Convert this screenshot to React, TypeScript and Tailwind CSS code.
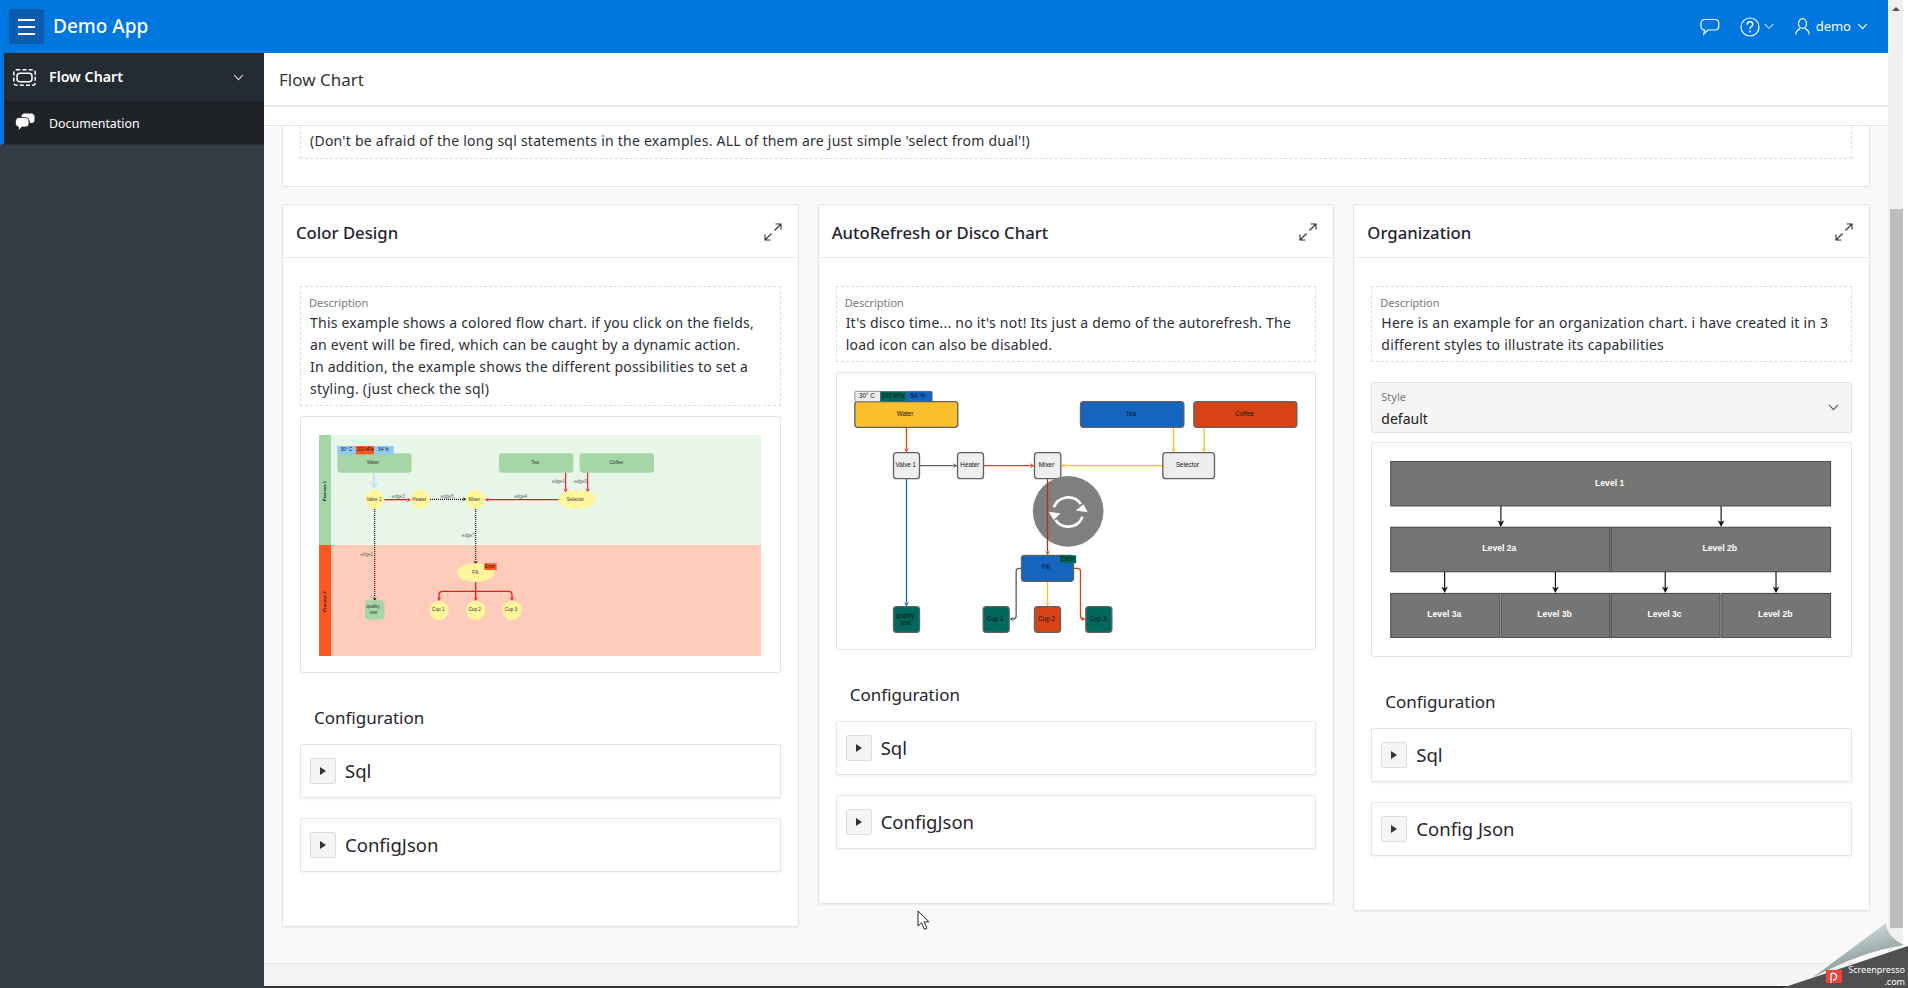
import type { ReactNode } from "react";

const Chevron = ({ className = "", color = "#fff" }: { className?: string; color?: string }) => (
  <svg className={className} viewBox="0 0 12 8" fill="none" stroke={color} strokeWidth="1.2">
    <polyline points="1,1 6,6.5 11,1" />
  </svg>
);

const ExpandIcon = () => (
  <svg className="w-[18px] h-[18px] -mt-[2px]" viewBox="0 0 18 18" fill="none" stroke="#3b2b2f" strokeWidth="1.1">
    <path d="M10.5 7.5 L17 1 M11.5 1 H17 V6.5" />
    <path d="M7.5 10.5 L1 17 M1 11.5 V17 H6.5" />
  </svg>
);

// arrow head pointing along +y, rotated into place
const Head = ({ x, y, a = 0, c, s = 7 }: { x: number; y: number; a?: number; c: string; s?: number }) => (
  <polygon
    transform={`translate(${x} ${y}) rotate(${a})`}
    points={`0,0 ${-s},${-2 * s} 0,${-1.4 * s} ${s},${-2 * s}`}
    fill={c}
  />
);

const ARIAL = "'Liberation Sans', Arial, sans-serif";

function ColorChart() {
  const yellow = "#fff59d";
  const green = "#a5d6a7";
  const label = (x: number, y: number, t: string, fill = "#333") => (
    <text x={x} y={y} fontSize="14" fill={fill} textAnchor="middle" dominantBaseline="middle">
      {t}
    </text>
  );
  return (
    <svg className="w-[442px] h-[221px] block" viewBox="57 45 1326 663" fontFamily={ARIAL}>
      <rect x="57" y="45" width="1326" height="330" fill="#e8f5e9" />
      <rect x="57" y="375" width="1326" height="333" fill="#ffccbc" />
      <rect x="57" y="45" width="36" height="330" fill={green} />
      <rect x="57" y="375" width="36" height="333" fill="#ff5722" />
      <text transform="translate(75 213) rotate(-90)" fontSize="13" fontWeight="700" textAnchor="middle" dominantBaseline="middle" fill="#111">Process 1</text>
      <text transform="translate(75 545) rotate(-90)" fontSize="13" fontWeight="700" textAnchor="middle" dominantBaseline="middle" fill="#111">Process 2</text>

      <rect x="112" y="100" width="223" height="58" rx="10" fill={green} />
      <rect x="597" y="100" width="223" height="58" rx="10" fill={green} />
      <rect x="839" y="100" width="223" height="58" rx="10" fill={green} />
      <rect x="112" y="78" width="55" height="25" fill="#90caf9" />
      <rect x="167" y="78" width="55" height="25" fill="#ff5722" />
      <rect x="222" y="78" width="59" height="25" fill="#90caf9" />
      {label(139, 90, "30° C", "#111")}
      {label(195, 90, "203 kPa", "#111")}
      {label(251, 90, "54 %", "#111")}
      {label(219, 128, "Water")}
      {label(705, 128, "Tea")}
      {label(949, 128, "Coffee")}

      {/* edges */}
      <path d="M222 158 V203" stroke="#bbdefb" strokeWidth="5" fill="none" />
      <path d="M212 185 L222 205 L232 185" stroke="#bbdefb" strokeWidth="3" fill="none" />
      <path d="M253 239 H322" stroke="#f01818" strokeWidth="4" />
      <Head x={333} y={239} a={-90} c="#f01818" s={6} />
      <path d="M390 238 H490" stroke="#111" strokeWidth="3.5" strokeDasharray="3 3" />
      <Head x={500} y={238} a={-90} c="#111" s={6} />
      <path d="M775 239 H565" stroke="#f01818" strokeWidth="4" />
      <Head x={555} y={239} a={90} c="#f01818" s={6} />
      <path d="M797 158 V208" stroke="#f01818" strokeWidth="3.5" />
      <Head x={797} y={218} c="#f01818" s={6} />
      <path d="M863 158 V208" stroke="#f01818" strokeWidth="3.5" />
      <Head x={863} y={218} c="#f01818" s={6} />
      <path d="M224 267 V532" stroke="#111" strokeWidth="3.5" strokeDasharray="3 3" />
      <Head x={224} y={544} c="#111" s={6} />
      <path d="M527 267 V422" stroke="#111" strokeWidth="3.5" strokeDasharray="3 3" />
      <Head x={527} y={434} c="#111" s={6} />
      <path d="M527 486 V535 M527 514 H428 Q417 514 417 525 V535 M527 514 H625 Q636 514 636 525 V535" stroke="#f01818" strokeWidth="4" fill="none" />
      <Head x={417} y={544} c="#f01818" s={6} />
      <Head x={527} y={544} c="#f01818" s={6} />
      <Head x={636} y={544} c="#f01818" s={6} />
      {label(295, 230, "edge3", "#666")}
      {label(442, 230, "edge5", "#666")}
      {label(662, 230, "edge4", "#666")}
      {label(775, 185, "edge6", "#666")}
      {label(842, 185, "edge5", "#666")}
      {label(505, 347, "edge7", "#666")}
      {label(201, 403, "edge1", "#666")}

      {/* nodes */}
      <circle cx="224" cy="238" r="29" fill={yellow} />
      <circle cx="361" cy="238" r="29" fill={yellow} />
      <circle cx="526" cy="238" r="29" fill={yellow} />
      <ellipse cx="831" cy="238" rx="56" ry="29" fill={yellow} />
      <ellipse cx="527" cy="458" rx="56" ry="28" fill={yellow} />
      <circle cx="417" cy="571" r="29" fill={yellow} />
      <circle cx="527" cy="571" r="29" fill={yellow} />
      <circle cx="636" cy="571" r="29" fill={yellow} />
      <rect x="195" y="541" width="58" height="58" rx="10" fill={green} />
      <rect x="553" y="430" width="37" height="20" fill="#ff5722" />
      {label(222, 239, "Valve 1")}
      {label(358, 239, "Heater")}
      {label(523, 239, "Mixer")}
      {label(826, 239, "Selector")}
      {label(526, 458, "Fill")}
      {label(415, 569, "Cup 1")}
      {label(524, 569, "Cup 2")}
      {label(633, 569, "Cup 3")}
      {label(219, 560, "quality")}
      {label(221, 578, "test")}
      {label(570, 440, "Error", "#111")}
    </svg>
  );
}

function DiscoChart() {
  const box = (x: number, y: number, w: number, h: number, fill: string) => (
    <rect x={x} y={y} width={w} height={h} rx="9" fill={fill} stroke="#616161" strokeWidth="4" />
  );
  const t = (x: number, y: number, s: string) => (
    <text x={x} y={y} fontSize="19" fill="#111" textAnchor="middle" dominantBaseline="middle">
      {s}
    </text>
  );
  const orange = "#d84315";
  const amber = "#fbc02d";
  const blue = "#1565c0";
  const teal = "#00695c";
  const gray = "#616161";
  const light = "#eeeeee";
  return (
    <svg className="w-[447px] h-[245px] block" viewBox="50 30 1340 735" fontFamily={ARIAL}>
      {/* edges */}
      <path d="M213 142 V206" stroke={orange} strokeWidth="4" />
      <Head x={213} y={218} c={orange} s={7} />
      <path d="M252 257 H354" stroke={gray} strokeWidth="4" />
      <Head x={366} y={257} a={-90} c={gray} s={7} />
      <path d="M444 257 H585" stroke={orange} strokeWidth="4" />
      <Head x={597} y={257} a={-90} c={orange} s={7} />
      <path d="M982 257 H688" stroke={amber} strokeWidth="4" />
      <Head x={676} y={257} a={90} c={amber} s={7} />
      <path d="M1014 142 V206" stroke={amber} strokeWidth="4" />
      <Head x={1014} y={218} c={amber} s={7} />
      <path d="M1106 142 V206" stroke={amber} strokeWidth="4" />
      <Head x={1106} y={218} c={amber} s={7} />
      <path d="M213 296 V668" stroke={blue} strokeWidth="4" />
      <Head x={213} y={680} c={blue} s={7} />
      <path d="M636 604 V668" stroke={amber} strokeWidth="4" />
      <Head x={636} y={680} c={amber} s={7} />
      <path d="M558 565 H551 Q542 565 542 574 V708 Q542 717 533 717" stroke={gray} strokeWidth="4" fill="none" />
      <Head x={521} y={717} a={90} c={gray} s={7} />
      <path d="M714 565 H726 Q735 565 735 574 V708 Q735 717 741 717" stroke={orange} strokeWidth="4" fill="none" />
      <Head x={751} y={717} a={-90} c={orange} s={7} />

      {/* nodes */}
      {box(58, 65, 309, 77, amber)}
      {box(735, 65, 310, 77, blue)}
      {box(1075, 65, 309, 77, orange)}
      {box(174, 218, 78, 78, light)}
      {box(366, 218, 78, 78, light)}
      {box(597, 218, 79, 78, light)}
      {box(982, 218, 155, 78, light)}
      {box(558, 526, 156, 78, blue)}
      {box(174, 680, 78, 77, teal)}
      {box(443, 680, 78, 77, teal)}
      {box(597, 680, 78, 77, orange)}
      {box(751, 680, 78, 77, teal)}
      <rect x="58" y="34" width="77" height="31" rx="4" fill={light} stroke={gray} strokeWidth="2" />
      <rect x="135" y="34" width="78" height="31" fill={teal} stroke={gray} strokeWidth="2" />
      <rect x="213" y="34" width="77" height="31" rx="4" fill={blue} stroke={gray} strokeWidth="2" />
      <rect x="673" y="526" width="49" height="24" rx="3" fill={teal} />
      {t(94, 49, "30° C")}
      {t(171, 49, "203 kPa")}
      {t(247, 49, "54 %")}
      {t(209, 102, "Water")}
      {t(886, 102, "Tea")}
      {t(1227, 102, "Coffee")}
      {t(211, 255, "Valve 1")}
      {t(403, 255, "Heater")}
      {t(633, 255, "Mixer")}
      {t(1056, 255, "Selector")}
      {t(631, 561, "Fill")}
      {t(696, 538, "Error")}
      {t(209, 708, "quality")}
      {t(211, 730, "test")}
      {t(479, 717, "Cup 1")}
      {t(633, 717, "Cup 2")}
      {t(787, 717, "Cup 3")}

      {/* load spinner */}
      <circle cx="698" cy="394" r="106" fill="#7f7f7f" />
      <path d="M636 296 V514" stroke="#a8351a" strokeWidth="4" />
      <Head x={636} y={526} c={orange} s={7} />
      <g fill="none" stroke="#fff" strokeWidth="8">
        <path d="M655 382 A46 46 0 0 1 736 372" />
        <path d="M741 410 A46 46 0 0 1 660 420" />
      </g>
      <polygon points="722,394 758,394 742,372" fill="#fff" transform="rotate(8 740 385)" />
      <polygon points="638,398 674,398 656,420" fill="#fff" transform="rotate(8 656 408)" />
    </svg>
  );
}

function OrgChart() {
  const node = (x: number, y: number, w: number, h: number, s: string) => (
    <g key={s + x}>
      <rect x={x} y={y} width={w} height={h} fill="#757575" stroke="#424242" strokeWidth="3" />
      <text x={x + w / 2 - 3} y={y + h / 2 - 1} fontSize="26" fontWeight="700" fill="#fff" textAnchor="middle" dominantBaseline="middle">
        {s}
      </text>
    </g>
  );
  const arrow = (x: number, y1: number, y2: number) => (
    <g key={x}>
      <path d={`M${x} ${y1} V${y2 - 12}`} stroke="#111" strokeWidth="3.5" />
      <Head x={x} y={y2} c="#111" s={10} />
    </g>
  );
  return (
    <svg className="w-[442px] h-[177px] block" viewBox="60 243 1326 532" fontFamily={ARIAL}>
      {node(61, 244, 1322, 134, "Level 1")}
      {node(61, 442, 659, 134, "Level 2a")}
      {node(723, 442, 660, 134, "Level 2b")}
      {node(61, 641, 328, 133, "Level 3a")}
      {node(393, 641, 327, 133, "Level 3b")}
      {node(723, 641, 328, 133, "Level 3c")}
      {node(1056, 641, 327, 133, "Level 2b")}
      {arrow(392, 378, 441)}
      {arrow(1054, 378, 441)}
      {arrow(223, 577, 640)}
      {arrow(556, 577, 640)}
      {arrow(886, 577, 640)}
      {arrow(1219, 577, 640)}
    </svg>
  );
}

const Collapsible = ({ title }: { title: string }) => (
  <div className="h-[54px] border border-[#e4e4e4] rounded-[2px] bg-white shadow-[0_2px_2px_rgba(0,0,0,0.04)] flex items-center pl-[9px] gap-[9px]">
    <div className="w-[26px] h-[26px] bg-[#f5f5f5] border border-[#dedede] rounded-[2px] flex items-center justify-center">
      <span className="w-0 h-0 border-y-[4.5px] border-y-transparent border-l-[6px] border-l-[#333]" />
    </div>
    <span className="text-[18.5px] leading-none text-[#1f2430] pt-[1px]">{title}</span>
  </div>
);

const Description = ({ children }: { children: ReactNode }) => (
  <div className="border border-dashed border-[#dcdcdc] pt-[8px] pb-[5px] px-[9px]">
    <div className="h-[17px] text-[11px] leading-[15px] text-[#777] -ml-[1px]">Description</div>
    <div className="text-[14px] tracking-[0.22px] leading-[22px] text-[#2b2f36]">{children}</div>
  </div>
);

function Card({ title, desc, chart, jsonLabel, extra }: { title: string; desc: ReactNode; chart: ReactNode; jsonLabel: string; extra?: ReactNode }) {
  return (
    <section className="bg-white border border-[#e4e4e4] rounded-[2px] shadow-[0_1px_2px_rgba(0,0,0,0.05)]">
      <header className="h-[53px] border-b border-[#e8e8e8] flex items-center justify-between pl-[13px] pr-[16px] pt-[4px]">
        <h2 className="text-[16.7px] font-medium text-[#1f2430]">{title}</h2>
        <ExpandIcon />
      </header>
      <div className="px-[17px] pt-[28px] pb-[54px]">
        <Description>{desc}</Description>
        {extra}
        {chart}
        <h3 className="mt-[33px] h-[24px] leading-[24px] pl-[14px] text-[17px] text-[#1f2430]">Configuration</h3>
        <div className="mt-[14px] flex flex-col gap-[20px]">
          <Collapsible title="Sql" />
          <Collapsible title={jsonLabel} />
        </div>
      </div>
    </section>
  );
}

const ChartBox = ({ children, cls }: { children: ReactNode; cls: string }) => (
  <div className={`border border-[#e4e4e4] rounded-[2px] bg-white ${cls}`}>{children}</div>
);

export default function App() {
  return (
    <div className="relative flex h-screen w-screen overflow-hidden bg-white font-['Noto_Sans',sans-serif]">
      <div className="flex flex-1 min-w-0 flex-col">
        <header className="h-[53px] shrink-0 bg-[#0076df] flex items-center pl-[9px] pr-[20px] text-white">
          <button className="w-[35px] h-[35px] rounded-[2px] bg-[#0a5cb0] flex flex-col items-center justify-center gap-[5px]">
            <span className="block w-[17px] h-[2px] bg-white" />
            <span className="block w-[17px] h-[2px] bg-white" />
            <span className="block w-[17px] h-[2px] bg-white" />
          </button>
          <span className="ml-[9px] text-[19px] font-medium">Demo App</span>
          <div className="ml-auto flex items-center">
            <svg className="w-[20px] h-[18px]" viewBox="0 0 20 18" fill="none" stroke="#fff" strokeWidth="1.2">
              <path d="M5 1.5 H15 Q18.8 1.5 18.8 5.5 V8 Q18.8 12 15 12 H8 L3.8 16 L4.6 12 Q1 11.6 1 8 V5.5 Q1 1.5 5 1.5 Z" />
            </svg>
            <svg className="ml-[20px] w-[20px] h-[20px]" viewBox="0 0 20 20" fill="none" stroke="#fff" strokeWidth="1.2">
              <circle cx="10" cy="10" r="9" />
              <path d="M7.2 7.6 Q7.4 4.8 10 4.8 Q12.8 4.8 12.8 7.2 Q12.8 8.8 11.2 9.6 Q10 10.2 10 12" strokeWidth="1.5" />
              <circle cx="10" cy="14.6" r="1" fill="#fff" stroke="none" />
            </svg>
            <Chevron className="ml-[4px] w-[10px] h-[7px]" />
            <svg className="ml-[21px] w-[15px] h-[17px]" viewBox="0 0 15 17" fill="none" stroke="#fff" strokeWidth="1.2">
              <ellipse cx="7.5" cy="5.5" rx="4" ry="4.8" />
              <path d="M0.8 16.5 Q1 12.2 5 10.6 M14.2 16.5 Q14 12.2 10 10.6" />
            </svg>
            <span className="ml-[6px] text-[13px]">demo</span>
            <Chevron className="ml-[6px] w-[11px] h-[7px]" />
          </div>
        </header>

        <div className="flex flex-1 min-h-0">
          <aside className="w-[264px] shrink-0 bg-[#343d46] text-white">
            <div className="h-[48px] bg-[#252b33] border-l-4 border-[#0076df] flex items-center pl-[9px] pr-[20px]">
              <svg className="w-[23px] h-[17px]" viewBox="0 0 23 17" fill="none" stroke="#fff" strokeWidth="1.5">
                <rect x="0.8" y="0.8" width="21.4" height="15.4" rx="2.5" strokeDasharray="4 2.2" />
                <rect x="4" y="4.2" width="15" height="8.6" rx="3" />
              </svg>
              <span className="ml-[13px] text-[14.2px] font-semibold">Flow Chart</span>
              <Chevron className="ml-auto w-[11px] h-[7px]" color="#d5d8dc" />
            </div>
            <div className="h-[44px] bg-[#1f2328] border-l-4 border-[#0076df] border-b border-b-[#2d333a] flex items-center pl-[11px]">
              <svg className="w-[20px] h-[19px]" viewBox="0 0 20 19" fill="#fff">
                <path d="M9 0.5 H16 Q19.5 0.5 19.5 4 V7 Q19.5 10 16.5 10 H15 Q15 6 11 5.5 H6.5 Q6 1 9 0.5 Z" />
                <path d="M4 4.5 H10.5 Q14 4.5 14 8 V10.5 Q14 14 10.5 14 H6.8 L3.5 18 V14 Q0.5 13.6 0.5 10.5 V8 Q0.5 4.5 4 4.5 Z" stroke="#1f2328" strokeWidth="0.8" />
              </svg>
              <span className="ml-[14px] pt-[3px] text-[12.4px]">Documentation</span>
            </div>
          </aside>

          <main className="flex-1 min-w-0 flex flex-col bg-[#f9f9f9]">
            <div className="h-[54px] shrink-0 bg-white border-b-2 border-[#ebebeb] flex items-center pl-[15px] pt-[2px]">
              <h1 className="text-[17px] text-[#333]">Flow Chart</h1>
            </div>
            <div className="h-[19px] shrink-0 bg-white border-b border-[#e4e4e4]" />
            <div className="flex-1 min-h-0 pl-[18px] pr-[18px]">
              <div className="h-[61px] bg-white border-x border-b border-[#e4e4e4] rounded-b-[2px] px-[17px]">
                <div className="h-[33px] border-x border-b border-dashed border-[#dcdcdc] px-[9px] text-[14px] tracking-[0.24px] leading-[30px] text-[#2b2f36]">
                  (Don't be afraid of the long sql statements in the examples. ALL of them are just simple 'select from dual'!)
                </div>
              </div>
              <div className="mt-[17px] grid grid-cols-3 gap-[19px] items-start">
                <Card
                  title="Color Design"
                  jsonLabel="ConfigJson"
                  desc={
                    <>
                      This example shows a colored flow chart. if you click on the fields,
                      <br />
                      an event will be fired, which can be caught by a dynamic action.
                      <br />
                      In addition, the example shows the different possibilities to set a styling. (just check the sql)
                    </>
                  }
                  chart={
                    <ChartBox cls="mt-[10px] pt-[18px] pb-[16px] pl-[18px]">
                      <ColorChart />
                    </ChartBox>
                  }
                />
                <Card
                  title="AutoRefresh or Disco Chart"
                  jsonLabel="ConfigJson"
                  desc="It's disco time... no it's not! Its just a demo of the autorefresh. The load icon can also be disabled."
                  chart={
                    <ChartBox cls="mt-[10px] pt-[17px] pb-[14px] pl-[15px]">
                      <DiscoChart />
                    </ChartBox>
                  }
                />
                <Card
                  title="Organization"
                  jsonLabel="Config Json"
                  desc="Here is an example for an organization chart. i have created it in 3 different styles to illustrate its capabilities"
                  extra={
                    <div className="mt-[20px] h-[51px] bg-[#f5f5f5] border border-[#e2e2e2] rounded-[2px] relative pl-[9px] pt-[6px]">
                      <div className="text-[11px] leading-[15px] text-[#777]">Style</div>
                      <div className="mt-[4px] text-[14px] leading-[22px] text-[#222]">default</div>
                      <Chevron className="absolute right-[12px] top-[21px] w-[11px] h-[7px]" color="#555" />
                    </div>
                  }
                  chart={
                    <ChartBox cls="mt-[9px] pt-[18px] pb-[18px] pl-[18px]">
                      <OrgChart />
                    </ChartBox>
                  }
                />
              </div>
            </div>
            <div className="h-[25px] shrink-0 bg-[#f5f5f5] border-t border-[#e8e8e8] border-b-2 border-b-[#333]" />
          </main>
        </div>
      </div>

      {/* scrollbar */}
      <div className="w-[20px] shrink-0 flex bg-white">
        <div className="w-[15px] bg-[#f0f0f0] flex flex-col items-center pt-[7px]">
          <span className="w-0 h-0 border-x-[4px] border-x-transparent border-b-[4px] border-b-[#505050]" />
          <div className="mt-[198px] ml-[2px] w-[13px] h-[719px] bg-[#bdbdbd]" />
        </div>
      </div>

      {/* mouse pointer captured in the screenshot */}
      <svg className="absolute left-[917px] top-[910px] w-[14px] h-[21px]" viewBox="0 0 14 21" fill="#fff" stroke="#222" strokeWidth="1">
        <path d="M1 1 V16 L4.6 12.8 L7.4 19.4 L10 18.2 L7.2 11.8 H12 Z" />
      </svg>

      {/* screenpresso page curl */}
      <svg className="absolute right-0 bottom-0 w-[128px] h-[70px]" viewBox="1780 918 128 70">
        <defs>
          <linearGradient id="curl" x1="0" y1="0" x2="0.45" y2="1">
            <stop offset="0" stopColor="#eef1f1" />
            <stop offset="0.5" stopColor="#b4c1c1" />
            <stop offset="0.8" stopColor="#8f9d9d" />
            <stop offset="1" stopColor="#e8ecec" />
          </linearGradient>
        </defs>
        <polygon points="1782,988 1908,946 1908,988" fill="#505050" />
        <path d="M1812 978 L1886 923 Q1887 937 1904 945 Q1860 952 1812 978 Z" fill="url(#curl)" />
        <rect x="1826" y="970" width="16" height="13" fill="#f04438" />
        <path d="M1831 983 V974 A3.4 3.4 0 1 1 1833 980" fill="none" stroke="#fff" strokeWidth="1.4" />
        <text x="1905" y="972.5" fontSize="9" fill="#fff" textAnchor="end" fontFamily="'Noto Sans', sans-serif">Screenpresso</text>
        <text x="1905" y="984.5" fontSize="9" fill="#fff" textAnchor="end" fontFamily="'Noto Sans', sans-serif">.com</text>
      </svg>
    </div>
  );
}
